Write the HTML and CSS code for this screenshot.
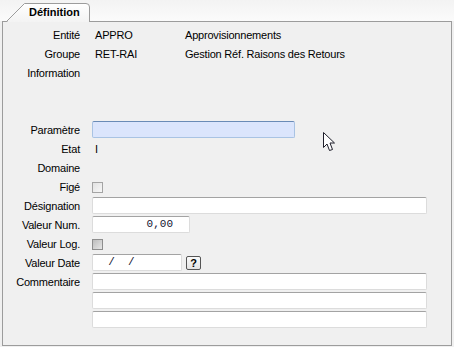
FILE: index.html
```html
<!DOCTYPE html>
<html lang="fr">
<head>
  <meta charset="UTF-8">
  <title>Définition</title>
  <link rel="stylesheet" href="styles.css">
</head>
<body>
  <div class="window">

    <!-- Tab strip -->
    <div class="tabbar">
      <div class="tab">
        <svg class="tab-shape" width="85" height="20" viewBox="0 0 85 20">
          <defs>
            <linearGradient id="tabFill" x1="0" y1="0" x2="0" y2="1">
              <stop offset="0" stop-color="#ffffff"/>
              <stop offset="1" stop-color="#f3f3f3"/>
            </linearGradient>
          </defs>
          <path d="M1 20 L18.5 1.5 L80 1.5 Q83.5 1.5 83.5 5 L83.5 20 Z" fill="url(#tabFill)"/>
          <path d="M0.5 19.5 L18.5 1.5 L80 1.5 Q83.5 1.5 83.5 5 L83.5 20" fill="none" stroke="#9c9c9c"/>
        </svg>
        <span class="tab-label">Définition</span>
      </div>
    </div>

    <!-- Panel -->
    <div class="panel">
      <div class="row">
        <span class="lbl">Entité</span>
        <span class="val code">APPRO</span>
        <span class="val">Approvisionnements</span>
      </div>
      <div class="row">
        <span class="lbl">Groupe</span>
        <span class="val code">RET-RAI</span>
        <span class="val">Gestion Réf. Raisons des Retours</span>
      </div>
      <div class="row">
        <span class="lbl">Information</span>
      </div>
      <div class="row"></div>
      <div class="row"></div>
      <div class="row">
        <span class="lbl">Paramètre</span>
        <div class="field field-focus w-param"></div>
      </div>
      <div class="row">
        <span class="lbl">Etat</span>
        <span class="val">I</span>
      </div>
      <div class="row">
        <span class="lbl">Domaine</span>
      </div>
      <div class="row">
        <span class="lbl">Figé</span>
        <span class="check"></span>
      </div>
      <div class="row">
        <span class="lbl">Désignation</span>
        <div class="field w-wide"></div>
      </div>
      <div class="row">
        <span class="lbl">Valeur Num.</span>
        <div class="field mono num w-num">0,00</div>
      </div>
      <div class="row">
        <span class="lbl">Valeur Log.</span>
        <span class="check check-off"></span>
      </div>
      <div class="row">
        <span class="lbl">Valeur Date</span>
        <div class="field mono date w-date">  /  /</div>
        <span class="help-btn">?</span>
      </div>
      <div class="row">
        <span class="lbl">Commentaire</span>
        <div class="field w-wide"></div>
      </div>
      <div class="row">
        <span class="lbl"></span>
        <div class="field w-wide"></div>
      </div>
      <div class="row">
        <span class="lbl"></span>
        <div class="field w-wide"></div>
      </div>
    </div>

    <!-- mouse pointer -->
    <svg class="cursor" width="13" height="20" viewBox="0 0 13 20">
      <path d="M0.5 0.5 L0.5 15.5 L4 12 L6.5 18.5 L9.5 17.5 L7 11 L11.5 11 Z" fill="#fff" stroke="#1e1e2a" stroke-linejoin="miter"/>
    </svg>
  </div>
</body>
</html>
```

FILE: styles.css
```css
html, body {
  margin: 0;
  padding: 0;
  background-color: #f0f0f0;
}
body {
  font-family: "Liberation Sans", Arial, sans-serif;
  font-size: 11px;
  letter-spacing: -0.2px;
  color: #000;
}
.window {
  position: relative;
  width: 454px;
  height: 347px;
  overflow: hidden;
  background: linear-gradient(#f3f3f3 0, #fbfbfb 21px, #f0f0f0 21px);
}

/* tabs */
.tabbar {
  height: 21px;
  padding-left: 6px;
  display: flex;
  align-items: flex-end;
}
.tab {
  position: relative;
  width: 85px;
  height: 20px;
  margin-bottom: -1px;
  z-index: 1;
}
.tab-shape {
  position: absolute;
  left: 0;
  top: 0;
}
.tab-label {
  position: absolute;
  left: 23px;
  top: 4px;
  font-weight: bold;
  line-height: 13px;
  letter-spacing: 0;
  color: #000;
}

/* panel */
.panel {
  margin: 0 2px;
  height: 325px;
  box-sizing: border-box;
  border: 1px solid #9c9c9c;
  background-color: #f0f0f0;
  padding-top: 3px;
}
.row {
  display: flex;
  align-items: center;
  height: 19px;
}
.lbl {
  flex: none;
  width: 77px;
  margin-right: 12px;
  text-align: right;
  white-space: nowrap;
}
.val {
  padding-left: 3px;
  white-space: nowrap;
}
.code {
  width: 87px;
}

/* edit fields */
.field {
  height: 17px;
  box-sizing: border-box;
  background-color: #fff;
  border: 1px solid #dcdcdc;
  border-top-color: #a3a3a3;
  border-radius: 2px;
}
.field-focus {
  background-color: #dbe5fc;
  border-color: #a9c3e3;
  border-top-color: #6a8bb6;
}
.w-param { width: 203px; }
.w-wide { width: 335px; }
.w-num { width: 98px; }
.w-date { width: 90px; }

.mono {
  font-family: "Liberation Mono", "Courier New", monospace;
  font-size: 11px;
  letter-spacing: 0;
  line-height: 15px;
  white-space: pre;
  color: #141432;
}
.num {
  text-align: right;
  padding-right: 16px;
}
.date {
  padding-left: 2px;
}

/* checkboxes */
.check {
  width: 11px;
  height: 11px;
  box-sizing: border-box;
  border: 1px solid #a4a4a4;
  background: linear-gradient(135deg, #e2e2e2, #f7f7f7);
  margin-top: 1px;
}
.check-off {
  border-color: #8e8e8e;
  background: linear-gradient(135deg, #bdbdbd, #e6e6e6);
}

/* "?" button */
.help-btn {
  width: 15px;
  height: 14px;
  box-sizing: border-box;
  margin-left: 4px;
  border: 1px solid #555;
  border-radius: 2px;
  background: linear-gradient(#fafafa, #e4e4e4);
  font-weight: bold;
  font-size: 11px;
  letter-spacing: 0;
  line-height: 12px;
  text-align: center;
}

.cursor {
  position: absolute;
  left: 323px;
  top: 132px;
}
```
